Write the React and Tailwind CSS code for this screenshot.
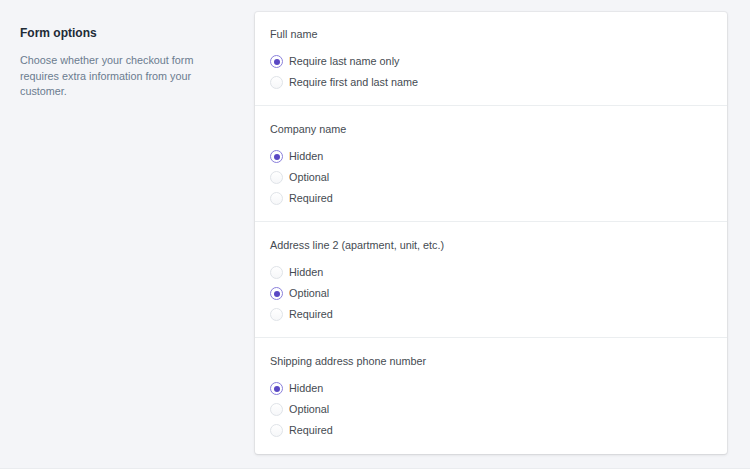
import React, { useState } from 'react';

const sections = [
  {
    key: 'fullName',
    title: 'Full name',
    options: ['Require last name only', 'Require first and last name'],
    value: 'Require last name only',
  },
  {
    key: 'company',
    title: 'Company name',
    options: ['Hidden', 'Optional', 'Required'],
    value: 'Hidden',
  },
  {
    key: 'address2',
    title: 'Address line 2 (apartment, unit, etc.)',
    options: ['Hidden', 'Optional', 'Required'],
    value: 'Optional',
  },
  {
    key: 'phone',
    title: 'Shipping address phone number',
    options: ['Hidden', 'Optional', 'Required'],
    value: 'Hidden',
  },
];

function Radio({ checked, label, onChange }) {
  return (
    <label className="flex items-center h-[21px] cursor-pointer" onClick={onChange}>
      <span
        className={
          checked
            ? 'w-[13px] h-[13px] rounded-full border border-[#8a7fdb] bg-white flex items-center justify-center shrink-0'
            : 'w-[13px] h-[13px] rounded-full border border-[#dfe3e8] bg-gradient-to-b from-white to-[#f6f7f9] shrink-0'
        }
      >
        {checked && <span className="w-[6px] h-[6px] rounded-full bg-[#5a48c4]" />}
      </span>
      <span className="ml-[6px] text-[10.8px] text-[#454b52]">{label}</span>
    </label>
  );
}

export default function App() {
  const [values, setValues] = useState(
    Object.fromEntries(sections.map((s) => [s.key, s.value]))
  );

  return (
    <div
      className="w-[750px] h-[469px] bg-[#f4f5f8] flex border-b border-[#eaecef] overflow-hidden"
      style={{ fontFamily: '"Liberation Sans", Arial, sans-serif' }}
    >
      {/* Left description */}
      <div className="w-[255px] shrink-0 pl-[20px] pr-[30px] pt-[25px]">
        <h2 className="text-[12px] font-bold text-[#212b36] leading-[16px]">Form options</h2>
        <p className="mt-[12px] text-[10.8px] leading-[15.5px] text-[#6b7c8f]">
          Choose whether your checkout form requires extra information from your customer.
        </p>
      </div>

      {/* Card */}
      <div className="mt-[12px] w-[472px] h-[442px] bg-white rounded-[3px] shadow-[0_0_0_1px_rgba(63,63,68,0.05),0_1px_3px_0_rgba(63,63,68,0.15)]">
        {sections.map((s, i) => (
          <div
            key={s.key}
            className={
              'px-[15px] ' +
              (i === 0 ? 'pt-[14px] pb-[12px] ' : 'pt-[15px] pb-[12px] ') +
              (i < sections.length - 1 ? 'border-b border-[#ebeef0]' : '')
            }
          >
            <div className="text-[10.8px] leading-[16px] text-[#454b52] mb-[9px]">{s.title}</div>
            <div className="flex flex-col">
              {s.options.map((o) => (
                <Radio
                  key={o}
                  label={o}
                  checked={values[s.key] === o}
                  onChange={() => setValues({ ...values, [s.key]: o })}
                />
              ))}
            </div>
          </div>
        ))}
      </div>
    </div>
  );
}
